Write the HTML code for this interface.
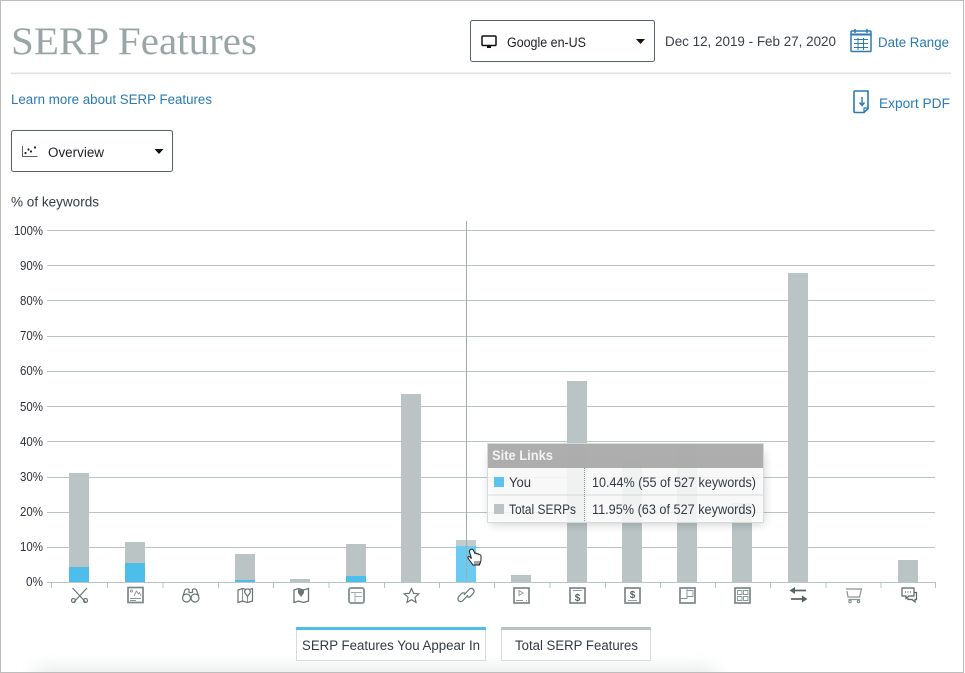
<!DOCTYPE html>
<html><head><meta charset="utf-8"><style>
html,body{margin:0;padding:0;background:#fff;width:965px;height:673px;overflow:hidden}
svg{display:block;font-family:"Liberation Sans",sans-serif}
.ic{fill:none;stroke:#6a7474;stroke-width:1.2}
.b{fill:#bac4c5}.u{fill:#4dbdec}
.g{stroke:#b9c4c4;stroke-width:1}
.y{font-size:12.5px;fill:#2d323a;text-anchor:end}
.bx{stroke:#7d8787;stroke-width:1.700}
.th{stroke:#8a9494;stroke-width:.9}
</style></head><body>
<svg width="965" height="673" viewBox="0 0 965 673">
<defs><filter id="bl" x="-10%" y="-200%" width="120%" height="500%"><feGaussianBlur stdDeviation="9"/></filter>
<filter id="sh" x="-10%" y="-20%" width="120%" height="150%"><feGaussianBlur stdDeviation="5"/></filter></defs>
<rect x="35" y="668" width="680" height="24" fill="#e6e8e8" filter="url(#bl)"/>
<rect x="0.5" y="0.5" width="963" height="672" fill="none" stroke="#bdbdbd"/>
<text x="11" y="54" font-family="Liberation Serif" font-size="39" fill="#9aa6a6" textLength="246" lengthAdjust="spacingAndGlyphs">SERP Features</text>
<rect x="11" y="72.500" width="940" height="1.600" fill="#dde3e3"/>
<text x="11" y="104" font-size="13.500" fill="#2a7ab5" textLength="201" lengthAdjust="spacingAndGlyphs">Learn more about SERP Features</text>

<rect x="470.500" y="20.500" width="184" height="41" rx="2" fill="#fff" stroke="#59636a"/>
<rect x="482" y="36" width="14" height="9.500" rx="1" fill="none" stroke="#111" stroke-width="1.500"/>
<rect x="487" y="46" width="4" height="2" fill="#111"/>
<text x="507" y="47" font-size="13.500" fill="#1c1f24" textLength="79" lengthAdjust="spacingAndGlyphs">Google en-US</text>
<path d="M636 39h9l-4.500 5z" fill="#111"/>
<text x="665" y="46" font-size="13.500" fill="#3a4048" textLength="171" lengthAdjust="spacingAndGlyphs">Dec 12, 2019 - Feb 27, 2020</text>
<g fill="none" stroke="#2a7ab5">
<rect x="851" y="31" width="20" height="20.500" rx="1" stroke-width="1.500"/>
<path d="M851 34.500h20" stroke-width="2"/>
<path d="M854 39.500h14M854 43.500h14M854 47.500h14M858 38v12M863.500 38v12" stroke-width="1"/>
<path d="M855 29v4M867 29v4" stroke-width="1.500"/>
</g>
<text x="878" y="47" font-size="13.500" fill="#2a7ab5" textLength="71" lengthAdjust="spacingAndGlyphs">Date Range</text>
<path d="M855 91h13v17.500l-4 4h-9a1 1 0 0 1-1-1v-19.500a1 1 0 0 1 1-1z" fill="none" stroke="#2a7ab5" stroke-width="1.600"/>
<path d="M868 108h-4v4" fill="none" stroke="#2a7ab5" stroke-width="1.200"/>
<path d="M862 97v8M859.500 102.500l2.500 3 2.500-3" fill="none" stroke="#2a7ab5" stroke-width="1.400"/>
<text x="879" y="108" font-size="13.500" fill="#2a7ab5" textLength="71" lengthAdjust="spacingAndGlyphs">Export PDF</text>

<rect x="11.500" y="130.500" width="161" height="41" rx="2" fill="#fff" stroke="#59636a"/>
<path d="M22.500 146v10.500h15" fill="none" stroke="#5c6468" stroke-width="1"/>
<g fill="#222"><circle cx="25.500" cy="153" r="1.100"/><circle cx="28.500" cy="149.500" r="1.100"/><circle cx="31" cy="151.500" r="1.100"/><circle cx="35" cy="147.500" r="1.100"/></g>
<text x="48" y="157" font-size="13.500" fill="#1c1f24" textLength="56" lengthAdjust="spacingAndGlyphs">Overview</text>
<path d="M154.500 149h9l-4.500 5z" fill="#111"/>
<text x="11" y="206.500" font-size="13.500" fill="#333a44" textLength="88" lengthAdjust="spacingAndGlyphs">% of keywords</text>

<g class="g">
<path d="M47 230.500H935M47 265.500H935M47 300.500H935M47 336.500H935M47 371.500H935M47 406.500H935M47 441.500H935M47 477.500H935M47 512.500H935M47 547.500H935M47 582.500H935"/>
<path d="M51.500 582v6M107.500 582v6M163 582v6M218.500 582v6M273.500 582v6M329 582v6M384.500 582v6M439.500 582v6M494.500 582v6M550 582v6M605.500 582v6M660.500 582v6M715.500 582v6M770.500 582v6M826 582v6M881 582v6M935.500 582v6"/>
</g>
<g class="y">
<text x="43" y="235" textLength="29" lengthAdjust="spacingAndGlyphs">100%</text>
<text x="43" y="270" textLength="23" lengthAdjust="spacingAndGlyphs">90%</text>
<text x="43" y="305" textLength="23" lengthAdjust="spacingAndGlyphs">80%</text>
<text x="43" y="340" textLength="23" lengthAdjust="spacingAndGlyphs">70%</text>
<text x="43" y="375" textLength="23" lengthAdjust="spacingAndGlyphs">60%</text>
<text x="43" y="411" textLength="23" lengthAdjust="spacingAndGlyphs">50%</text>
<text x="43" y="446" textLength="23" lengthAdjust="spacingAndGlyphs">40%</text>
<text x="43" y="481" textLength="23" lengthAdjust="spacingAndGlyphs">30%</text>
<text x="43" y="516" textLength="23" lengthAdjust="spacingAndGlyphs">20%</text>
<text x="43" y="551" textLength="23" lengthAdjust="spacingAndGlyphs">10%</text>
<text x="43" y="586" textLength="17" lengthAdjust="spacingAndGlyphs">0%</text>
</g>

<rect class="b" x="69" y="473" width="20" height="109"/><rect class="u" x="69" y="567" width="20" height="15"/>
<rect class="b" x="125" y="542" width="20" height="40"/><rect class="u" x="125" y="563" width="20" height="19"/>
<rect class="b" x="235" y="554" width="20" height="28"/><rect class="u" x="235" y="580" width="20" height="2"/>
<rect class="b" x="290" y="579" width="20" height="3"/>
<rect class="b" x="346" y="544" width="20" height="38"/><rect class="u" x="346" y="576" width="20" height="6"/>
<rect class="b" x="401" y="394" width="20" height="188"/>
<rect x="456" y="540" width="20" height="42" fill="#c3cccd"/><rect x="456" y="546" width="20" height="36" fill="#6bcaf0"/>
<rect class="b" x="511" y="575" width="20" height="7"/>
<rect class="b" x="567" y="381" width="20" height="201"/>
<rect class="b" x="622" y="462" width="20" height="120"/>
<rect class="b" x="677" y="444" width="20" height="138"/>
<rect class="b" x="732" y="503" width="20" height="79"/>
<rect class="b" x="788" y="273" width="20" height="309"/>
<rect class="b" x="898" y="560" width="20" height="22"/>
<path d="M466.500 221V582" stroke="#a3acac" stroke-width="1"/>

<!-- icons -->
<g class="ic">
<path d="M72.500 588l13 14M87 588l-13 14"/><circle cx="73.500" cy="600.500" r="2"/><circle cx="85.500" cy="600.500" r="2"/>
<rect x="128" y="587.500" width="15" height="15" class="bx"/><path d="M130 598.500h11M130 600.500h6M134 596l2.500-5 2 3 1-1.500 1.500 3.500" class="th"/><circle cx="131.500" cy="591" r="1" class="th"/>
<circle cx="186.500" cy="598" r="4"/><circle cx="195" cy="598" r="4"/><path d="M183 596l2-6q2-2 4-.5v3M198.500 596l-2-6q-2-2-4-.5v3M188.500 592.500h4.500"/>
<path d="M238 590l4.500-1.500 5 1.500 5-1.500v12.500l-5 1.500-5-1.500-4.500 1.500z"/><path d="M247.500 596.500l-2.500-3.500a2.800 2.800 0 1 1 5 0z" fill="#fff"/><path d="M242.500 589v12M247.500 597v5" stroke-width=".8"/>
<path d="M294 590l4.500-1.500 5 1.500 5-1.500v12.500l-5 1.500-5-1.500-4.500 1.500z" stroke-width="1.300"/><path d="M301 597l-3-4v-3.500h6v3.500z" fill="#6a7474" stroke="none"/>
<rect x="349" y="588" width="15" height="15" rx="2" stroke-width="2" stroke="#8f9999"/><path d="M351 592.500h11M355 593v9M355 596.500h7" stroke="#a5aeae" stroke-width="1"/>
<path d="M411.500 588.500l2.100 4.800 5.200.5-3.900 3.500 1.100 5.100-4.500-2.700-4.500 2.700 1.100-5.100-3.900-3.500 5.200-.5z"/>
<path d="M464 595l5-5.500a2.800 2.800 0 0 1 4.500 3.500l-3 3.500a2.800 2.800 0 0 1-4-.5M468 595l-5 5.500a2.800 2.800 0 0 1-4.500-3.500l3-3.500a2.800 2.800 0 0 1 4 .5"/>
<rect x="514" y="588" width="15" height="15" class="bx"/><path d="M516 600.500h7M526 600.500h1M519 590.500l4 2.500-4 2.500z" class="th"/>
<rect x="570" y="588" width="15" height="15" class="bx"/><path d="M573 590.500h9" class="th"/>
<text x="577.500" y="601" font-size="10" font-weight="bold" fill="#596363" stroke="none" text-anchor="middle">$</text>
<rect x="625" y="588" width="15" height="15" class="bx"/><path d="M628 600.500h9" class="th"/>
<text x="632.500" y="598" font-size="10" font-weight="bold" fill="#596363" stroke="none" text-anchor="middle">$</text>
<rect x="680" y="588" width="15" height="15" class="bx"/><path d="M687 589v9.500h-6M687 590.500h6v6h-6" class="th"/>
<rect x="735" y="588" width="15" height="15" class="bx"/><path d="M737.500 590.500h4.500v4h-4.500zM743.500 590.500h4.500v4h-4.500zM737.500 596.500h4.500v4h-4.500zM743.500 596.500h4.500v4h-4.500z" class="th"/>
<path d="M793 590.500h13M804 599h-13" stroke="#596363" stroke-width="1.800"/>
<path d="M795 587l-5.500 3.500 5.500 3.500zM802 595.500l5.500 3.500-5.500 3.500z" fill="#596363" stroke="none"/>
<path d="M846 589h15.500l-2 8h-11.500l-1-6M848.500 599.500h11.500" stroke="#8a9494" stroke-width="1.200"/>
<circle cx="850" cy="601.500" r="1.200" stroke="#8a9494"/><circle cx="858.500" cy="601.500" r="1.200" stroke="#8a9494"/>
<path d="M902 588h12v8h-5l-3 2.500v-2.500h-4z" stroke="#596363"/>
<path d="M914 592.500h2.500v7h-1.500v2.500l-3-2.500h-4v-1.500" stroke="#596363"/>
<path d="M905 592h1M907.500 592h1M910 592h1" stroke="#596363" stroke-width="1.300"/>
</g>

<!-- tooltip -->
<rect x="490" y="452" width="274" height="72" fill="#000" opacity=".2" filter="url(#sh)"/>
<rect x="487.500" y="443.500" width="276" height="79" fill="#fff" fill-opacity=".86" stroke="#d5dada"/>
<rect x="488" y="444" width="275" height="24" fill="#a0a0a0" fill-opacity=".85"/>
<text x="492" y="460" font-size="13.500" font-weight="bold" fill="#f2f2f2" textLength="61" lengthAdjust="spacingAndGlyphs">Site Links</text>
<path d="M488 495h275" stroke="#d5dada"/>
<path d="M584.500 468v54" stroke="#8c9494" stroke-dasharray="1 1"/>
<rect x="494" y="477" width="10" height="10" fill="#5cc2ef"/>
<text x="509" y="487" font-size="13.500" fill="#333a44" textLength="22" lengthAdjust="spacingAndGlyphs">You</text>
<text x="592" y="487" font-size="13.500" fill="#333a44" textLength="164" lengthAdjust="spacingAndGlyphs">10.44% (55 of 527 keywords)</text>
<rect x="494" y="504" width="10" height="10" fill="#bac4c5"/>
<text x="509" y="514" font-size="13.500" fill="#333a44" textLength="67" lengthAdjust="spacingAndGlyphs">Total SERPs</text>
<text x="592" y="514" font-size="13.500" fill="#333a44" textLength="164" lengthAdjust="spacingAndGlyphs">11.95% (63 of 527 keywords)</text>

<!-- cursor -->
<path d="M470.500 549.500c1.500-1 2.500 0 3 1l1.500 3 .5-.5c1 0 1.500.5 1.500 1 1-.5 2 0 2 .7 1-.3 2 .3 2 1.300v3.500c0 2-1 4-1.500 5.500h-6.500l-4-5.500-1-1.500c-.5-1 .5-2 2-1l1.500 1.500-2-6.500c-.3-1 0-1.500.5-2z" fill="#fff" stroke="#222" stroke-width="1"/>
<path d="M475 561v3.500M477 561v3.500M479 561v3.500" stroke="#222" stroke-width=".8"/>

<!-- legend -->
<rect x="296.500" y="627.500" width="189" height="33" fill="#fff" stroke="#d5dcdc"/>
<rect x="296" y="627" width="190" height="3" fill="#4dbdec"/>
<text x="302" y="650" font-size="13.500" fill="#333a44" textLength="178" lengthAdjust="spacingAndGlyphs">SERP Features You Appear In</text>
<rect x="501.500" y="627.500" width="149" height="33" fill="#fff" stroke="#d5dcdc"/>
<rect x="501" y="627" width="150" height="3" fill="#bac4c5"/>
<text x="515" y="650" font-size="13.500" fill="#333a44" textLength="123" lengthAdjust="spacingAndGlyphs">Total SERP Features</text>
</svg>
</body></html>
